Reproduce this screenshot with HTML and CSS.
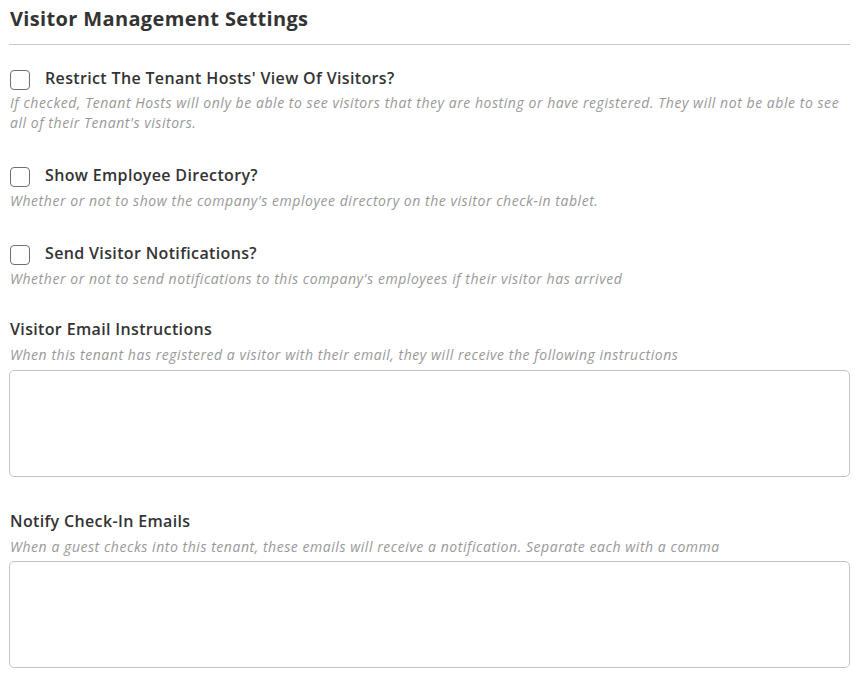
FILE: index.html
```html
<!DOCTYPE html>
<html>
<head>
<meta charset="utf-8">
<link rel="stylesheet" href="styles.css">
</head>
<body>
<div class="settings">
  <h2 class="title">Visitor Management Settings</h2>
  <div class="field check-field">
    <label class="check-row"><span class="box"></span><span class="label">Restrict The Tenant Hosts' View Of Visitors?</span></label>
    <p class="help">If checked, Tenant Hosts will only be able to see visitors that they are hosting or have registered. They will not be able to see all of their Tenant's visitors.</p>
  </div>
  <div class="field check-field">
    <label class="check-row"><span class="box"></span><span class="label">Show Employee Directory?</span></label>
    <p class="help">Whether or not to show the company's employee directory on the visitor check-in tablet.</p>
  </div>
  <div class="field check-field">
    <label class="check-row"><span class="box"></span><span class="label">Send Visitor Notifications?</span></label>
    <p class="help">Whether or not to send notifications to this company's employees if their visitor has arrived</p>
  </div>
  <div class="field text-field first-text">
    <div class="label">Visitor Email Instructions</div>
    <p class="help">When this tenant has registered a visitor with their email, they will receive the following instructions</p>
    <div class="textarea"></div>
  </div>
  <div class="field text-field second-text">
    <div class="label">Notify Check-In Emails</div>
    <p class="help">When a guest checks into this tenant, these emails will receive a notification. Separate each with a comma</p>
    <div class="textarea"></div>
  </div>
</div>
</body>
</html>
```
FILE: styles.css
```css
html, body {
  margin: 0;
  padding: 0;
  background: #fff;
}
body {
  font-family: "Open Sans", Lato, sans-serif;
  color: #333;
}
.settings {
  width: 841px;
  margin-left: 9px;
  padding-top: 4px;
}
.title {
  margin: 0;
  font-size: 20px;
  font-weight: 700;
  letter-spacing: 0.35px;
  line-height: 30px;
  padding-left: 1px;
  padding-bottom: 10px;
  border-bottom: 1px solid #c8c8c8;
  color: #333;
}
.check-field {
  margin-top: 21px;
}
.check-field + .check-field {
  margin-top: 30px;
}
.check-row {
  display: flex;
  align-items: center;
  gap: 15px;
  padding-left: 1px;
  height: 24px;
}
.box {
  flex: none;
  width: 20px;
  height: 20px;
  border: 1px solid #707070;
  border-radius: 4px;
  box-sizing: border-box;
  margin-top: 3px;
}
.label {
  font-size: 16px;
  font-weight: 600;
  letter-spacing: 0.35px;
  line-height: 24px;
  color: #333;
}
.help {
  margin: 3px 0 0 1px;
  font-size: 14px;
  font-style: italic;
  letter-spacing: 0.55px;
  color: #999;
  line-height: 20px;
}
.check-field + .check-field .help {
  margin-top: 4px;
}
.text-field .label {
  padding-left: 1px;
}
.text-field .help {
  margin-top: 4px;
}
.first-text {
  margin-top: 28px;
}
.second-text {
  margin-top: 32px;
}
.textarea {
  margin-top: 5px;
  height: 107px;
  border: 1px solid #c4c4c4;
  border-radius: 5px;
  box-sizing: border-box;
}
.second-text .textarea {
  margin-top: 4px;
}
```
